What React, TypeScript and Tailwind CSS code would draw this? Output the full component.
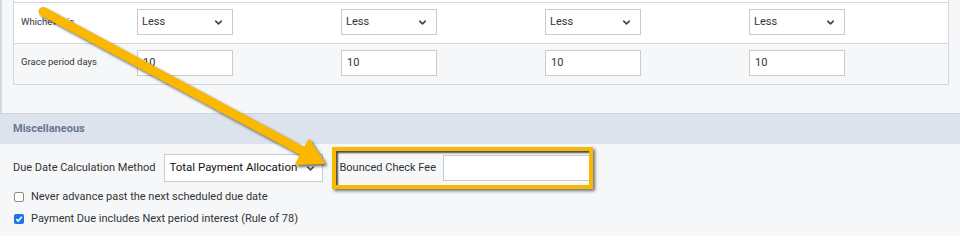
import { ChevronDown } from 'lucide-react';

const cols = [0, 1, 2, 3];

function LessSelect() {
  return (
    <div className="flex h-[26px] w-[96px] items-center justify-between border border-[#c9cbcf] bg-white pl-[4px] pr-[8px] text-[11px] text-[#333]">
      <span>Less</span>
      <ChevronDown size={11} strokeWidth={3.5} className="text-[#444]" />
    </div>
  );
}

function DaysInput() {
  return (
    <div className="flex h-[26px] w-[96px] items-center border border-[#c9cbcf] bg-white pl-[5px] text-[11px] text-[#333]">10</div>
  );
}

function Arrow() {
  return (
    <svg
      className="pointer-events-none absolute left-0 top-0 drop-shadow-[2px_2px_1.5px_rgba(0,0,0,0.6)]"
      width="960"
      height="236"
      viewBox="0 0 960 236"
    >
      <line x1="43" y1="11.5" x2="306" y2="153" stroke="#fbb800" strokeWidth="9" strokeLinecap="round" />
      <polygon points="324,163 296,164 309,140" fill="#fbb800" stroke="#fbb800" strokeWidth="2" strokeLinejoin="round" />
    </svg>
  );
}

export default function App() {
  return (
    <div className="relative h-[236px] w-[960px] overflow-hidden bg-[#f6f7f9] font-['Roboto','Liberation_Sans',sans-serif] text-[#333]">
      <div className="border-l-2 border-[#d6dae0] pb-[28px] pl-[11px]">
        <div className="w-[936px] border-x border-b border-[#d3d7dd]">
          <div className="h-[2px] bg-white" />
          <div className="grid h-[41px] grid-cols-[123px_204px_204px_204px_1fr] border-t border-[#d3d7dd] bg-white">
            <div className="pl-[7px] pt-[12px] text-[9.5px]">Whichever is</div>
            {cols.map((c) => (
              <div key={c} className="pt-[6px]">
                <LessSelect />
              </div>
            ))}
          </div>
          <div className="grid h-[41px] grid-cols-[123px_204px_204px_204px_1fr] border-t border-[#d3d7dd] bg-[#f6f7f9]">
            <div className="pl-[7px] pt-[11px] text-[9.5px]">Grace period days</div>
            {cols.map((c) => (
              <div key={c} className="pt-[6px]">
                <DaysInput />
              </div>
            ))}
          </div>
        </div>
      </div>

      <div className="flex h-[31px] items-center border-t border-[#cfd5de] bg-[#dde3ec] pl-[13px] text-[11px] font-bold text-[#687893]">
        Miscellaneous
      </div>

      <div className="pl-[13px] pt-[3px]">
        <div className="flex items-center">
          <span className="text-[11px]">Due Date Calculation Method</span>
          <div className="ml-[9px] flex h-[28px] w-[159px] items-center justify-between border border-[#c9cbcf] bg-white pl-[4px] pr-[6px] text-[11.5px] text-[#111]">
            <span>Total Payment Allocation</span>
            <ChevronDown size={11} strokeWidth={3.5} className="text-[#555]" />
          </div>
          <div className="ml-[9px] flex h-[42px] w-[261px] items-center border-4 border-[#fbb800] pl-[3px] shadow-[2px_2px_3px_rgba(0,0,0,0.55),inset_2px_2px_2px_rgba(0,0,0,0.7)]">
            <span className="text-[11px]">Bounced Check Fee</span>
            <div className="ml-[7px] h-[26px] flex-1 border border-r-0 border-[#c9cbcf] bg-white" />
          </div>
        </div>
        <div className="flex flex-col gap-[6px] pl-[1px]">
          <label className="flex h-[16px] items-center gap-[7px] text-[11px]">
            <span className="h-[10px] w-[10px] rounded-[2px] border border-[#8a8a8a] bg-white" />
            Never advance past the next scheduled due date
          </label>
          <label className="flex h-[16px] items-center gap-[7px] text-[11px]">
            <span className="flex h-[10px] w-[10px] items-center justify-center rounded-[2px] bg-[#1a73e8]">
              <svg width="8" height="8" viewBox="0 0 8 8">
                <path d="M1.2 4.2 L3.2 6.1 L6.9 1.8" fill="none" stroke="#fff" strokeWidth="1.6" />
              </svg>
            </span>
            Payment Due includes Next period interest (Rule of 78)
          </label>
        </div>
      </div>

      <Arrow />
    </div>
  );
}
